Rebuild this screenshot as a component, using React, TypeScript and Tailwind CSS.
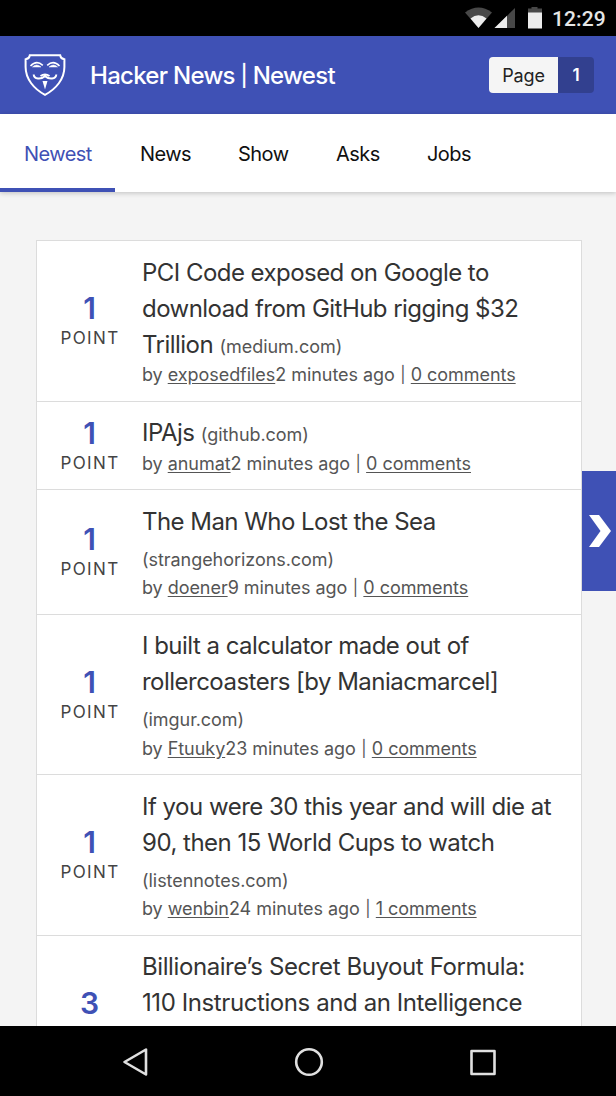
type Story = {
  points: number;
  lines: string[];
  domain?: string;
  inlineDomain?: boolean;
  by?: string;
  age?: string;
  comments?: string;
  height: string;
  inset: string;
  tracking: string;
};

const stories: Story[] = [
  { points: 1, lines: ['PCI Code exposed on Google to', 'download from GitHub rigging $32', 'Trillion'], domain: 'medium.com', inlineDomain: true, by: 'exposedfiles', age: '2 minutes ago', comments: '0 comments', height: 'h-[161px]', inset: 'pt-[14px]', tracking: 'tracking-[-0.54px]' },
  { points: 1, lines: ['IPAjs'], domain: 'github.com', inlineDomain: true, by: 'anumat', age: '2 minutes ago', comments: '0 comments', height: 'h-[88px]', inset: 'pt-[13px] [&>div:last-child]:pt-px', tracking: 'tracking-[-0.54px]' },
  { points: 1, lines: ['The Man Who Lost the Sea'], domain: 'strangehorizons.com', by: 'doener', age: '9 minutes ago', comments: '0 comments', height: 'h-[125px]', inset: 'pt-[14px]', tracking: 'tracking-[-0.54px]' },
  { points: 1, lines: ['I built a calculator made out of', 'rollercoasters [by Maniacmarcel]'], domain: 'imgur.com', by: 'Ftuuky', age: '23 minutes ago', comments: '0 comments', height: 'h-[160px]', inset: 'pt-[13px] [&>div:last-child]:pt-px', tracking: 'tracking-[-0.52px]' },
  { points: 1, lines: ['If you were 30 this year and will die at', '90, then 15 World Cups to watch'], domain: 'listennotes.com', by: 'wenbin', age: '24 minutes ago', comments: '1 comments', height: 'h-[161px]', inset: 'pt-[14px]', tracking: 'tracking-[-0.5px]' },
  { points: 3, lines: ['Billionaire’s Secret Buyout Formula:', '110 Instructions and an Intelligence'], height: 'h-[160px]', inset: 'pt-[13px]', tracking: 'tracking-[-0.41px]' },
];

function StatusBar() {
  return (
    <div className="flex h-9 shrink-0 items-center bg-black pl-[465px] font-[Roboto,sans-serif] text-[#e6e6e6]">
      <svg width="82" height="36" viewBox="0 0 82 36">
        <path d="M0 12.500Q13.500 2.500 27 12.500L13.500 28Z" fill="#484848" />
        <path d="M5.500 18.500Q13.500 12 21.500 18.500L13.500 28Z" fill="#ececec" />
        <path d="M50 8V28H29.500Z" fill="#484848" />
        <path d="M42 15.800V28H29.500Z" fill="#ececec" />
        <path d="M63 8.500h3.500V7h6v1.500H77V13H63Z" fill="#484848" />
        <path d="M63 12.500h14V28.500H63Z" fill="#ececec" />
      </svg>
      <span className="ml-[5px] mt-[2px] text-[21px] leading-none font-medium tracking-[0.1px] whitespace-nowrap">12:29</span>
    </div>
  );
}

function Logo() {
  return (
    <svg width="42" height="42" viewBox="0 0 42 42" fill="none" stroke="#fff">
      <path d="M5.800 1.300H36.200Q36.800 4.900 40.400 5.300V13C40.400 25 32 35 21 40.800C10 35 1.600 25 1.600 13V5.300Q5.200 4.900 5.800 1.300Z" strokeWidth="2" />
      <path d="M6.500 12Q12.500 5.500 18.800 11.300M23.200 11.300Q29.500 5.500 35.500 12" strokeWidth="1.600" />
      <path d="M8.500 13Q12.500 9 17 13ZM25 13Q29.500 9 33.500 13Z" fill="#fff" strokeWidth=".5" />
      <path d="M9.700 20.500C10 25.500 17 25.500 20.600 22.500H21.400C25 25.500 32 25.500 32.300 20.500M16.500 22Q21 19 25.500 22" strokeWidth="2" />
      <path d="M18.500 27H23.500L21 35.500Z" fill="#fff" stroke="none" />
    </svg>
  );
}

function Header() {
  return (
    <header className="flex h-[78px] shrink-0 items-center bg-[#3f51b5] pl-6 pr-[22px]">
      <Logo />
      <h1 className="ml-6 pt-[2px] text-[24px] leading-none font-medium tracking-[-0.72px] whitespace-nowrap text-white">
        Hacker News <span className="align-[1px] text-[21px]">|</span> Newest
      </h1>
      <div className="ml-auto flex h-9 w-[105px] overflow-hidden rounded-[4px] text-[18px]">
        <span className="flex w-[69px] items-center justify-center bg-[#f5f5f5] tracking-[-0.1px] text-[#222]">Page</span>
        <span className="flex flex-1 items-center justify-center bg-[#32408f] pt-px text-[17px] font-semibold text-white">1</span>
      </div>
    </header>
  );
}

function Tabs() {
  return (
    <nav className="z-10 flex h-[78px] shrink-0 bg-white text-[20px] tracking-[-0.55px] text-[#111] shadow-[0_1px_5px_rgba(0,0,0,0.22)]">
      <a className="flex w-[115px] items-center border-b-4 border-[#3f51b5] pt-[6px] pl-6 text-[#3f51b5]">Newest</a>
      <a className="ml-[25px] flex w-[98px] items-center pt-[2px]">News</a>
      <a className="flex w-[98px] items-center pt-[2px]">Show</a>
      <a className="flex w-[91px] items-center pt-[2px]">Asks</a>
      <a className="flex items-center pt-[2px]">Jobs</a>
    </nav>
  );
}

function StoryRow({ story }: { story: Story }) {
  const last = story.lines.length - 1;
  return (
    <li className={`flex shrink-0 border-b border-[#dcdcdc] ${story.height}`}>
      <div className="flex w-[105px] shrink-0 flex-col items-center justify-center">
        <span className="text-[30px] leading-[32px] font-semibold text-[#3f51b5]">{story.points}</span>
        <span className="mt-[2px] pl-[1px] text-[17px] leading-[24px] tracking-[1.4px] text-[#444]">{story.points === 1 ? 'POINT' : 'POINTS'}</span>
      </div>
      <div className={`whitespace-nowrap text-[#555] ${story.inset}`}>
        {story.lines.map((line, i) => (
          <div key={line} className={`h-9 text-[24px] leading-9 text-[#333] ${story.tracking}`}>
            {line}
            {story.inlineDomain && i === last && <span className="ml-[1.5px] text-[18px] tracking-[-0.05px] text-[#555]"> ({story.domain})</span>}
          </div>
        ))}
        {story.domain && !story.inlineDomain && <div className="h-9 pt-[2px] text-[18px] leading-9 tracking-[-0.05px]">({story.domain})</div>}
        {story.by && (
          <div className="-mt-[2px] text-[18px] leading-[27px] tracking-[-0.05px]">
            by <a className="underline underline-offset-2">{story.by}</a>{story.age} <span className="inline-block w-[6px] text-center align-[1px] text-[16px] leading-none">|</span> <a className="underline underline-offset-2">{story.comments}</a>
          </div>
        )}
      </div>
    </li>
  );
}

function NavigationBar() {
  return (
    <div className="z-20 flex h-[70px] shrink-0 items-center bg-black">
      <svg width="616" height="70" viewBox="0 0 616 70" fill="none" stroke="#e0e0e0" strokeWidth="2.600" strokeLinejoin="round">
        <path d="M146 23.500V48.500L124.500 36Z" />
        <circle cx="309" cy="36" r="12.800" />
        <rect x="471.500" y="25" width="23" height="23" />
      </svg>
    </div>
  );
}

export default function App() {
  return (
    <div className="relative flex h-[1096px] w-[616px] flex-col overflow-hidden bg-[#f4f4f4] font-[Inter,sans-serif]">
      <StatusBar />
      <Header />
      <Tabs />
      <main className="min-h-0 flex-1 overflow-hidden pt-12 pl-9">
        <ul className="flex w-[546px] flex-col border border-[#dcdcdc] bg-white">
          {stories.map((story) => <StoryRow key={story.lines[0]} story={story} />)}
        </ul>
      </main>
      <NavigationBar />
      <button aria-label="Next page" className="absolute top-[471px] right-0 flex h-[120px] w-[34px] items-center bg-[#3f51b5] pl-[7px]">
        <svg width="22" height="32" viewBox="0 0 22 32" fill="#fff"><path d="M0 0H10L22 16L10 32H0L11.500 16Z" /></svg>
      </button>
    </div>
  );
}
